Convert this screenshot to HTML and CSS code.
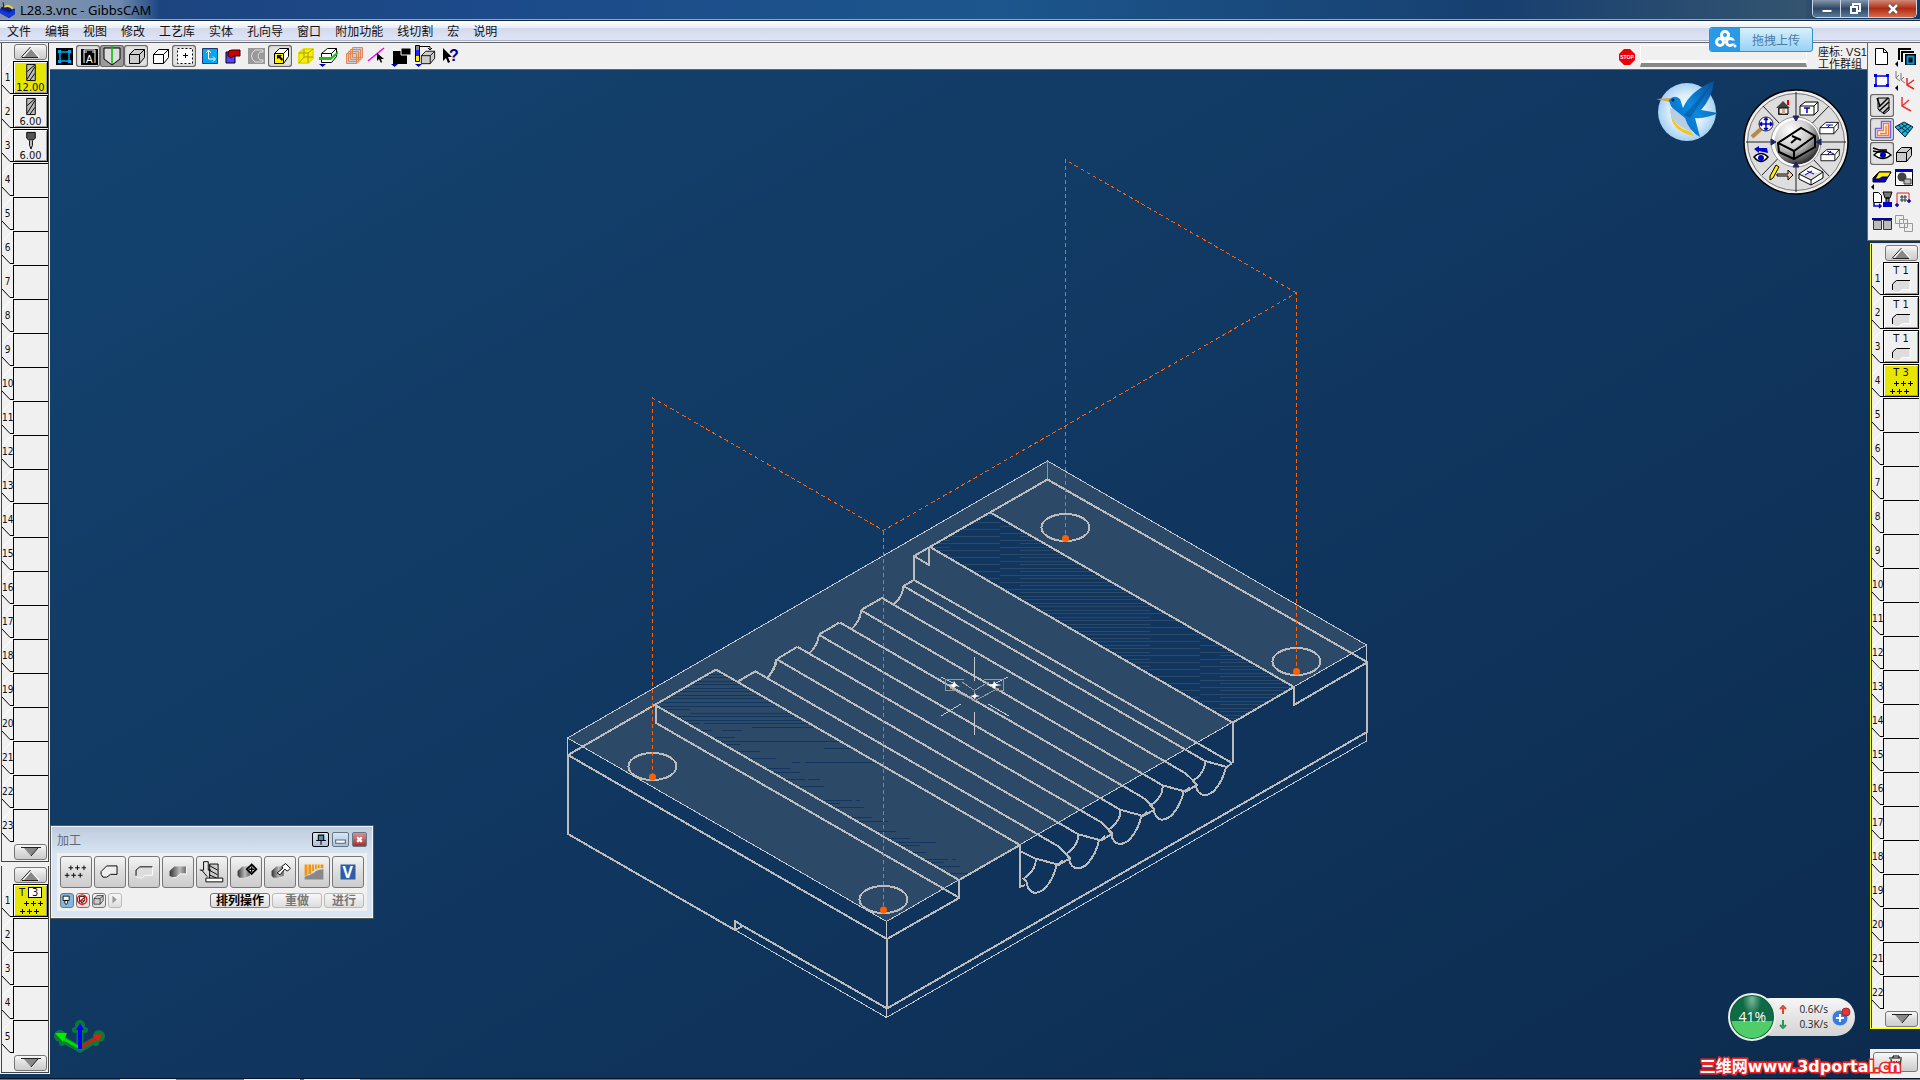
FILE: index.html
```
<!DOCTYPE html>
<html lang="zh-CN">
<head>
    <meta charset="UTF-8">
    <meta name="viewport" content="width=device-width, initial-scale=1.0">
    <title>L28.3.vnc - GibbsCAM</title>
    <link rel="stylesheet" href="styles.css">
</head>
<body>

    <!-- Shared shapes -->
    <svg class="sprite" aria-hidden="true">
        <symbol id="up" viewBox="0 0 24 12"><path d="M3 11L12 2l9 9z" fill="#fff"/><path d="M5 11l7-8 7 8z" fill="#888"/><path d="M2 11.500L11.500 1M3 11.500h16" stroke="#222" fill="none"/></symbol>
        <symbol id="down" viewBox="0 0 24 12"><path d="M5 2h14l-7 8z" fill="#888"/><path d="M2 1.500h20M19 2l-7 8" stroke="#222" fill="none"/></symbol>
        <symbol id="mill" viewBox="0 0 12 20"><path d="M1.500 1.500h9v17h-9z" fill="#bbb" stroke="#000"/><path d="M2 9l8-7M2 17l8-13M5 18l5-7" stroke="#000" fill="none"/></symbol>
        <symbol id="pluses" viewBox="0 0 24 16"><path d="M5 4.500h5M7.500 2v5M12 4.500h5M14.500 2v5M19 4.500h5M21.500 2v5M1 12.500h5M3.500 10v5M8 12.500h5M10.500 10v5M15 12.500h5M17.500 10v5" stroke="#000" fill="none"/></symbol>
        <symbol id="contour" viewBox="0 0 20 14"><path d="M1 12V5l4-4h14v9h-7l-4 3H3z" fill="#ddd"/><path d="M1.500 11V5l4-3.500H19" stroke="#000" fill="none"/><path d="M2 12l2 1.500h4l3-3h8V2" stroke="#fff" fill="none"/></symbol>
        <symbol id="cube" viewBox="0 0 18 18"><path d="M1.500 7.500l5-5h10v8l-5 6h-10z" fill="currentColor" stroke="#000"/><path d="M1.500 7.500h10v9M11.500 7.500l5-5" fill="none" stroke="#000"/></symbol>
        <symbol id="block" viewBox="0 0 24 16"><path d="M1 7L8 1h14v7l-5 6H1z" fill="#fff" stroke="#000"/><path d="M1 7h16v7M17 7l5-6" stroke="#000" fill="none"/></symbol>
    </svg>

    <header class="titlebar">
        <svg class="app-icon" viewBox="0 0 16 16"><path d="M0 7l5-4 10 4v5l-6 4-9-5z" fill="#0a1a9a"/><path d="M0 7l9 4 6-4v5l-6 4-9-5z" fill="#1238d8"/><path d="M4 5q5-3 9 2" stroke="#e8d820" stroke-width="2" fill="none"/><path d="M3 0l1 7-3-2" stroke="#222" fill="none"/></svg>
        <h1>L28.3.vnc - GibbsCAM</h1>
        <div class="window-buttons">
            <button aria-label="最小化"><svg viewBox="0 0 14 12"><path d="M2 6.500h10v3H2z" fill="#fff" stroke="#456"/></svg></button>
            <button aria-label="还原"><svg viewBox="0 0 14 12"><path d="M5 3V1h7v7h-2" fill="none" stroke="#fff" stroke-width="2"/><path d="M3 4h6v6H3z" fill="none" stroke="#fff" stroke-width="2"/></svg></button>
            <button class="close" aria-label="关闭"><svg viewBox="0 0 14 12"><path d="M3 2l8 8M11 2l-8 8" stroke="#444" stroke-width="4"/><path d="M3 2l8 8M11 2l-8 8" stroke="#fff" stroke-width="2.500"/></svg></button>
        </div>
    </header>

    <nav class="menubar">
        <button>文件</button>
        <button>编辑</button>
        <button>视图</button>
        <button>修改</button>
        <button>工艺库</button>
        <button>实体</button>
        <button>孔向导</button>
        <button>窗口</button>
        <button>附加功能</button>
        <button>线切割</button>
        <button>宏</button>
        <button>说明</button>
    </nav>

    <div class="workspace">

        <aside class="left">
            <section class="strip" aria-label="刀具">
                <button class="scroll" aria-label="向上"><svg><use href="#up"/></svg></button>
                <ol>
                    <li><span>1</span><button class="filled active"><svg class="tool"><use href="#mill"/></svg>12.00</button></li>
                    <li><span>2</span><button class="filled"><svg class="tool"><use href="#mill"/></svg>6.00</button></li>
                    <li><span>3</span><button class="filled"><svg class="tool" viewBox="0 0 12 20"><path d="M1.500 1.500h9v6l-2 2h-5l-2-2z" fill="#555" stroke="#000"/><path d="M4.500 10v5l1.500 4 1.500-4v-5" fill="#ccc" stroke="#000"/></svg>6.00</button></li>
                    <li><span>4</span><button></button></li>
                    <li><span>5</span><button></button></li>
                    <li><span>6</span><button></button></li>
                    <li><span>7</span><button></button></li>
                    <li><span>8</span><button></button></li>
                    <li><span>9</span><button></button></li>
                    <li><span>10</span><button></button></li>
                    <li><span>11</span><button></button></li>
                    <li><span>12</span><button></button></li>
                    <li><span>13</span><button></button></li>
                    <li><span>14</span><button></button></li>
                    <li><span>15</span><button></button></li>
                    <li><span>16</span><button></button></li>
                    <li><span>17</span><button></button></li>
                    <li><span>18</span><button></button></li>
                    <li><span>19</span><button></button></li>
                    <li><span>20</span><button></button></li>
                    <li><span>21</span><button></button></li>
                    <li><span>22</span><button></button></li>
                    <li><span>23</span><button></button></li>
                </ol>
                <button class="scroll" aria-label="向下"><svg><use href="#down"/></svg></button>
            </section>
            <section class="strip" aria-label="工序">
                <button class="scroll" aria-label="向上"><svg><use href="#up"/></svg></button>
                <ol>
                    <li><span>1</span><button class="filled active process"><i>T <b>3</b></i><svg class="pluses"><use href="#pluses"/></svg></button></li>
                    <li><span>2</span><button></button></li>
                    <li><span>3</span><button></button></li>
                    <li><span>4</span><button></button></li>
                    <li><span>5</span><button></button></li>
                </ol>
                <button class="scroll" aria-label="向下"><svg><use href="#down"/></svg></button>
            </section>
        </aside>

        <main class="center">
            <div class="toolbar">
                <button aria-label="工作群组"><svg viewBox="0 0 24 22"><path d="M4 3h17v17H4z"/><path d="M8 7h9v9H8z" fill="none" stroke="#00a8f0" stroke-width="1.500"/><path d="M6 5h3v3H6zM16 5h3v3h-3zM6 15h3v3H6zM16 15h3v3h-3z" fill="#00a8f0"/></svg></button>
                <button class="on" aria-label="文字"><svg viewBox="0 0 24 22"><path d="M5 4h17v16H5z"/><path d="M8 7h3M16 7h3M8 5v13M19 5v13M8 5h11" stroke="#fff" fill="none"/><text x="10" y="18" font-size="10" fill="#fff">A</text></svg></button>
                <button class="on dark" aria-label="毛坯"><svg viewBox="0 0 24 22"><path d="M4 3h16v11l-8 6-8-6z" fill="#ddd" stroke="#000"/><path d="M12 0v19" stroke="#0b0" stroke-width="1.500"/></svg></button>
                <button class="on" aria-label="实体显示"><svg class="c-grey" viewBox="0 0 24 22"><use href="#cube" x="4" y="2" width="18" height="18"/></svg></button>
                <button aria-label="线框"><svg class="c-white" viewBox="0 0 24 22"><use href="#cube" x="4" y="2" width="18" height="18"/></svg></button>
                <button class="on" aria-label="选取框"><svg viewBox="0 0 24 22"><path d="M5.500 3.500h15v15h-15z" fill="#fff" stroke="#000" stroke-dasharray="2 2"/><path d="M11 10.500h5M13.500 8v5" stroke="#000"/></svg></button>
                <button aria-label="坐标"><svg viewBox="0 0 24 22"><path d="M6.500 3.500h15v15h-15z" fill="#00a8f0" stroke="#237"/><path d="M12.500 6v8h6M10 8l2.500-3L15 8M17 11.500l2.500 2.500-2.500 2.500" fill="none" stroke="#fff"/></svg></button>
                <button aria-label="零件"><svg viewBox="0 0 24 22"><path d="M6 7h9v11H6z" fill="#54f" stroke="#000"/><path d="M12 5h8v6h-6l-3 2-3-2V8q0-3 4-3z" fill="#c00" stroke="#300"/></svg></button>
                <button aria-label="轮廓"><svg viewBox="0 0 24 22"><path d="M4 3h17v16H4z" fill="#999"/><path d="M19 5h-8q-7 6 0 12h8v-2h-3q-4-4 0-8h3z" fill="none" stroke="#ddd"/></svg></button>
                <button class="on" aria-label="选面"><svg viewBox="0 0 24 22"><path d="M6.500 8.500l5-5h9v8l-5 7h-9z" fill="#fff" stroke="#000"/><path d="M6.500 8.500h9v10h-9z" fill="#fe0" stroke="#000"/><path d="M15.500 8.500l5-5" stroke="#000"/><path d="M9 10h5l-1.500 1.500L15 14l-1 2-3-3-2 1z"/></svg></button>
                <button aria-label="选边"><svg viewBox="0 0 24 22"><path d="M7 8l5-4h9v9l-5 5H7z" fill="#f5ee10" stroke="#e8e000" stroke-width="2"/><path d="M7 8h9v10M16 8l5-4M12 4v8h9M12 12l-5 6" fill="none" stroke="#aa9f00"/></svg></button>
                <button aria-label="切片"><svg viewBox="0 0 24 22"><path d="M5.500 8.500l6-5h9v8l-5 6h-10z" fill="#fff" stroke="#000"/><path d="M5.500 8.500h10v3M15.500 8.500l5-5" fill="none" stroke="#000"/><path d="M3 12h12l7-6v3l-7 6H3z" fill="#2b2"/><path d="M3 19h7l-3.500 3z" fill="#00a"/></svg></button>
                <button aria-label="图层"><svg viewBox="0 0 24 22"><path d="M6 9l6-6h11v10l-5 6H6z" fill="#ccc"/><path d="M6.500 8.500h10v10h-10zM8.500 6.500h10v10h-10zM10.500 4.500h10v10h-10zM12.500 2.500h10v10h-10z" fill="none" stroke="#e08858"/></svg></button>
                <button aria-label="线段"><svg viewBox="0 0 24 22"><path d="M4 16L20 3" stroke="#e0e" stroke-width="1.500"/><path d="M13 8v8l2-2 2 4 1-1-1-3h3z"/></svg></button>
                <button aria-label="颜色"><svg viewBox="0 0 24 22"><path d="M5 6h14v13H5z"/><path d="M13 3h10v7H13z" stroke="#f0f0f0"/><path d="M3 19h7l-3.500 3z" fill="#00a"/></svg></button>
                <button aria-label="渲染"><svg class="c-grey" viewBox="0 0 24 22"><path d="M4 1h3v4H4z" fill="#888"/><path d="M4 5h3v6H4z" fill="#22f"/><path d="M4 11h3v5H4z" fill="#fe0"/><path d="M3.500.5h4v16h-4zM8 1.500h10v3M16 3l2 2 2-2" fill="none" stroke="#000"/><use href="#cube" x="8" y="4" width="16" height="16"/><path d="M3 19h7l-3.500 3z" fill="#00a"/></svg></button>
                <button aria-label="帮助"><svg viewBox="0 0 24 22"><path d="M7 3v13l3-3 2 5 2-1-2-5h4z"/><text x="13" y="16" font-size="16" font-weight="bold" fill="#008">?</text></svg></button>

                <div class="status">
                    <svg class="stop" viewBox="0 0 16 16"><path d="M5 0h6l5 5v6l-5 5H5l-5-5V5z" fill="#e00"/><text x="8" y="10" font-size="5" font-weight="bold" text-anchor="middle" fill="#fff">STOP</text></svg>
                    <div class="progress"></div>
                    <p><span>座标: VS1</span><span>工作群组</span></p>
                </div>
            </div>

            <div class="viewport">
                <svg class="scene" viewBox="50 70 1817 1008" preserveAspectRatio="xMinYMin meet">
                    <defs>
                        <pattern id="hatch" width="200" height="7" patternUnits="userSpaceOnUse">
                            <path d="M0 1.500h150M20 4.500h180" stroke="#2c4a67"/>
                        </pattern>
                        <clipPath id="pocket"><path d="M716 669.500L1020 845 959 880 656 705.500z"/></clipPath>
                        <g id="scallop">
                            <path d="M1205 761l22 6 5-4M1205 761q1 11-12 20l4 5M1226 767q-3 14-12 24-13 10-18-4l1-2"/>
                        </g>
                        <g id="groove">
                            <path d="M903.500 586L1205 761M882 598l303 175q5 4 12 12M903.500 586q-1 11-10 19M1197 785l-12 7"/>
                            <use href="#scallop"/>
                        </g>
                    </defs>

                    <!-- stock block, top face -->
                    <path d="M1047.500 461L1366.500 645 886.500 921.500 567.500 738z" fill="#2c4a67"/>
                    <path d="M989.500 512L1294 687 1232.500 722.500 930 547z" fill="#11365f"/>
                    <path d="M989.500 512L1294 687 1232.500 722.500 930 547z" fill="url(#hatch)"/>
                    <g clip-path="url(#pocket)" stroke="#11365f" shape-rendering="crispEdges">
                        <path d="M650 674.500h90M650 677.500h90M650 681.500h90M650 684.500h100M650 688.500h100M650 691.500h110M650 695.500h115M650 698.500h120M650 702.500h130M650 706.500h140M650 709.500h40M690 713.500h100M650 716.500h160M650 720.500h170M650 723.500h50M704 723.500h120M752 727.500h90M650 730.500h62M722 730.500h20M650 737.500h85M650 741.500h200M650 744.500h90M824 748.500h50M650 751.500h110M650 758.500h126M792 762.500h8M805 762.500h90M650 768.500h140M650 772.500h150M650 779.500h155M808 779.500h12M650 786.500h174M650 800.500h202M856 800.500h4M650 803.500h190M650 807.500h214M650 817.500h222M650 821.500h238M650 831.500h246M650 838.500h260M650 842.500h286M650 845.500h270M650 852.500h276M650 859.500h298M952 859.500h4M650 862.500h294M650 866.500h310M650 873.500h320"/>
                    </g>

                    <!-- stock outline -->
                    <g class="thin">
                        <path d="M1047.500 461L1366.500 645 886.500 921.500 567.500 738zM567.500 738v18M1366.500 645v96M886.500 921v96M735 930l151.500 87.500L1366.500 741"/>
                        <path d="M1047.500 461v18" stroke="#8b96a2"/>
                    </g>

                    <!-- solid edges -->
                    <g class="edge">
                        <path d="M1367 662L1047.500 479.500 914 556v24M914 556l15 9v-18"/>
                        <path d="M989.500 512L1294 687M930 547l302.500 175.500"/>
                        <path d="M914 580l318 183M903.500 586l10.500-6"/>
                        <path d="M882 598l-21 12M839.500 622.500l-20.500 12M797 647l-20 12M755 671.500l-17 10M776 659q-1 11-9 19"/>
                        <path d="M568 755l148-85.500L1020 845M656 705.500L959 880M656 705.500V723l302 174"/>
                        <path d="M568 755v79l167 96v-9l8 5-8 4M743 926l144 82.500L1367 732v-69.500L1294 705v-18l-61 35.500V763"/>
                        <path d="M568 755l319 184 72-41v-18l61-35v42l5-2M887 939v69.500M1020 851l16 8"/>
                        <use href="#groove"/>
                        <use href="#groove" x="-42.300" y="24.400"/>
                        <use href="#groove" x="-84.600" y="48.800"/>
                        <use href="#groove" x="-126.900" y="73.200"/>
                        <use href="#scallop" x="-169.200" y="97.600"/>
                    </g>
                    <g class="edge">
                        <ellipse cx="652.500" cy="766.500" rx="24" ry="13.500"/>
                        <ellipse cx="883.500" cy="899.500" rx="24" ry="13.500"/>
                        <ellipse cx="1065.500" cy="527.500" rx="24" ry="13.500"/>
                        <ellipse cx="1296.500" cy="661.500" rx="24" ry="13.500"/>
                    </g>

                    <!-- part origin -->
                    <g class="thin">
                        <path d="M974.500 657v24M974.500 712v23M961 704l-20 12M988 704l21 12M941 677l14 7M1008 677l-14 7"/>
                        <path d="M964 679.500h-18.500v11h8M984 679.500h19.500v11h-8M950 688l24.500 13 24-13M962 682l12.500 8.500 14-8.500M974.500 690v10" stroke="#999"/>
                    </g>
                    <path d="M948 685l5-1 1-3 2 3 4 3-4-1-2 2-2-2zM986 685l7-1 1-3 2 3 6 1-6 1-2 3-2-3zM970 696l4-1 1-2 1 2 4 1-4 1-1 2-2-2z" fill="#fff"/>

                    <!-- drill toolpath -->
                    <path class="rapid" d="M652.500 777V398l231 132.500 413-237.500v379M1296.500 293l-231-133v378M883.500 530.500V910"/>
                    <g fill="#ff6000">
                        <circle cx="652.500" cy="777" r="3.500"/>
                        <circle cx="883.500" cy="910" r="3.500"/>
                        <circle cx="1065.500" cy="538.500" r="3.500"/>
                        <circle cx="1296.500" cy="671.500" r="3.500"/>
                    </g>
                </svg>

                <svg class="axes" viewBox="0 0 54 38">
                    <g stroke="#0a7a3c" stroke-width="7" stroke-linecap="round"><path d="M27 31V8M27 31L7 20M27 31l20-12"/></g>
                    <g fill="#0a7a3c"><circle cx="27" cy="7" r="5"/><circle cx="22" cy="12" r="3"/><circle cx="32" cy="12" r="3"/><circle cx="7" cy="18" r="6"/><circle cx="46" cy="18" r="6"/><circle cx="9" cy="25" r="3"/><circle cx="43" cy="25" r="3"/></g>
                    <path d="M27 30L9 20" stroke="#0d0" stroke-width="3"/><path d="M2 15l12 0-4 9z" fill="#0e0"/>
                    <path d="M27 30l18-11" stroke="#d22010" stroke-width="3"/><path d="M49 16l-4 8-5-7z" fill="#e02010"/>
                    <path d="M27 31V9" stroke="#00f" stroke-width="4"/><path d="M23 12l4-7 4 7z" fill="#00f"/>
                </svg>

                <svg class="bird" viewBox="0 0 64 62">
                    <defs><radialGradient id="sky"><stop offset="0" stop-color="#fff"/><stop offset=".6" stop-color="#dceefc"/><stop offset="1" stop-color="#a5d0f4"/></radialGradient>
                    <linearGradient id="wing" x1="1" y1="0" x2="0" y2="1"><stop offset="0" stop-color="#0a4890"/><stop offset=".5" stop-color="#0a8ae0"/><stop offset="1" stop-color="#0660b8"/></linearGradient></defs>
                    <circle cx="31" cy="32" r="29" fill="url(#sky)"/>
                    <path d="M15 32q2 15 20 20l3 4q-24-5-23-24z" fill="#f5c518"/>
                    <path d="M14 28q-1 16 22 24l-5-16-8-8z" fill="#b8cfe2"/>
                    <path d="M0 19l14-1v4z" fill="#d8a848"/>
                    <path d="M13 20q5-6 11-1l3 9Q34 11 58 1 56 18 45 30l17 3q-12 6-23 5l5 19q-11-6-15-19l-10-8q-5-3-6-10z" fill="url(#wing)"/>
                    <path d="M28 35Q38 25 56 3 44 24 34 38z" fill="#084c94" opacity=".5"/>
                    <circle cx="17" cy="20" r="1.500" fill="#024"/>
                </svg>

                <svg class="wheel" viewBox="0 0 106 106">
                    <defs><radialGradient id="ball" cx=".35" cy=".25" r=".8"><stop offset="0" stop-color="#fff"/><stop offset=".5" stop-color="#ccc"/><stop offset="1" stop-color="#222"/></radialGradient></defs>
                    <circle cx="53" cy="53" r="52" fill="#eee" stroke="#000" stroke-width="1.500"/>
                    <circle cx="53" cy="53" r="48.500" fill="#dedede" stroke="#777"/>
                    <path d="M53 3v100M3 53h100M20 17l66 70M86 17L19 86" stroke="#222"/>
                    <circle cx="53" cy="53" r="25" fill="#fff" stroke="#999"/>
                    <circle cx="54" cy="53" r="22.500" fill="url(#ball)"/>
                    <path d="M50 27h6l-3 5zM50 78h6l-3-5zM28 50v6l5-3zM78 50v6l-5-3z" fill="#226" stroke="#226"/>
                    <path d="M35 54l23-15 14 8v11L51 70 36 63zM35 54l16 8 21-15M51 62v8" fill="none" stroke="#000" stroke-width="2"/>
                    <path d="M49 47l9 4M54 49l-6 5" stroke="#000" stroke-width="2"/>
                    <path d="M33 19l7-7 7 7zM35 19h10v7H35z" fill="#444"/><path d="M36 19h9v6h-9z" fill="#eee" stroke="#000"/><path d="M39 20h3v5h-3z" fill="#ca8"/><path d="M44 11h2v5h-2z" fill="#d00"/>
                    <path d="M57 17l5-4h13v9l-4 4H57zM57 17h14v9M71 17l4-4" fill="#fff" stroke="#000"/><path d="M61 19h6M64 19v5" stroke="#00b" stroke-width="1.500"/>
                    <use href="#block" x="76" y="32" width="21" height="15"/><path d="M83 36h7M87 36l-3 3" stroke="#00b"/>
                    <use href="#block" x="77" y="59" width="21" height="15"/><path d="M84 62l7 3M88 62l-4 4" stroke="#00b"/>
                    <path d="M56 85l12-8 12 6v6l-12 7-12-6zM56 85l12 6 12-8M68 91v5" fill="#fff" stroke="#000"/><path d="M64 82l7 3M69 82l-7 4" stroke="#00b"/>
                    <path d="M9 48l10-9" stroke="#b58a48" stroke-width="4"/><circle cx="23" cy="35" r="7" fill="#fff" stroke="#222"/><path d="M17 35h12M23 29v12M21 31l2-2 2 2M21 39l2 2 2-2M19 33l-2 2 2 2M27 33l2 2-2 2" fill="none" stroke="#00c" stroke-width="1.500"/>
                    <path d="M25 64l-1-5-8 0v-2l-5 3 5 4v-2z" fill="#00c"/><path d="M11 68q7-7 14 0-7 9-14 0z" fill="#fff" stroke="#000" stroke-width="1.500"/><circle cx="18" cy="69" r="3" fill="#00c"/>
                    <path d="M27 87l6-11 3 2-6 11-3 2z" fill="#fe0" stroke="#000"/><path d="M34 85h11v-4l5 5-5 5v-4H34z" fill="#eca" stroke="#000"/>
                </svg>

                <section class="machining">
                    <header>
                        <h2>加工</h2>
                        <button class="pin" aria-label="固定"><svg viewBox="0 0 14 12"><path d="M5 2h5v5H5zM3 7h9M7.500 7v4" fill="#58a" stroke="#000"/></svg></button>
                        <button class="mini" aria-label="最小化"><svg viewBox="0 0 14 12"><path d="M2.500 6.500h9v3h-9z" fill="#fff" stroke="#567"/></svg></button>
                        <button class="shut" aria-label="关闭"><svg viewBox="0 0 14 12"><path d="M4.500 3.500l5 5M9.500 3.500l-5 5" stroke="#fff" stroke-width="2.500"/></svg></button>
                    </header>
                    <div class="machining-body">
                        <div class="operations">
                            <button aria-label="钻孔"><svg viewBox="0 0 32 32"><use href="#pluses" x="3" y="7" width="24" height="16"/></svg></button>
                            <button aria-label="外形"><svg viewBox="0 0 32 32"><path d="M6.500 18.500v-3l6-6h11v9h-7l-4 3h-4z" fill="#eee" stroke="#000"/></svg></button>
                            <button aria-label="轮廓"><svg viewBox="0 0 32 32"><use href="#contour" x="6" y="9" width="20" height="14"/></svg></button>
                            <button aria-label="粗加工"><svg viewBox="0 0 32 32"><defs><linearGradient id="metal"><stop offset="0" stop-color="#333"/><stop offset=".6" stop-color="#bbb"/><stop offset="1" stop-color="#666"/></linearGradient></defs><path d="M7 20v-5l5-5h13v8h-7l-4 4H9z" fill="url(#metal)"/><path d="M8 21l2 1h4l4-4h7v-8" fill="none" stroke="#fff"/></svg></button>
                            <button aria-label="螺纹铣削"><svg viewBox="0 0 32 32"><path d="M13.500 7.500h9v16h-9z" fill="#ccc" stroke="#000"/><path d="M13 9l9 5M13 14l9 5M13 19l9 4M3 14h4V5h5v9h3M5 14l6 7" stroke="#000" fill="none"/><path d="M9.500 22.500h18v4h-18z" fill="#fff" stroke="#000"/></svg></button>
                            <button aria-label="曲面"><svg viewBox="0 0 32 32"><path d="M7 20v-5l5-5h8v10l-6 2H9z" fill="url(#metal)"/><path d="M22 8l5 5-5 5-5-5z" fill="#fff" stroke="#000" stroke-width="2"/><path d="M19 13h6M22 10v6" stroke="#000" stroke-width="1.500"/></svg></button>
                            <button aria-label="高级"><svg viewBox="0 0 32 32"><path d="M7 20v-5l5-5h8v10l-6 2H9z" fill="url(#metal)"/><path d="M22 7l5 5-3 3-3-2-5 6-3-2 6-5-1-2z" fill="#fff" stroke="#000"/></svg></button>
                            <button aria-label="五轴"><svg viewBox="0 0 32 32"><path d="M6 8h3v12H6zM10 8h3v10h-3zM14 8h2v7h-2zM17 8h2v5h-2zM20 8h2v4h-2zM23 8h3v4h-3z" fill="#f5930a"/><path d="M6 24v-3q10-3 12-6 3-2 8-2v11z" fill="#888"/></svg></button>
                            <button aria-label="VoluMill"><svg viewBox="0 0 32 32"><path d="M8 8h16v16H8z" fill="#2a5ca8"/><text x="10" y="22" font-size="17" font-weight="bold" fill="#fff">V</text></svg></button>
                        </div>
                        <div class="actions">
                            <button class="small lit" aria-label="刀具"><svg viewBox="0 0 14 15"><path d="M2.500 2.500h7v5h-7zM4.500 7.500h3v3l-1.500 2-1.500-2z" fill="#fff" stroke="#000"/></svg></button>
                            <button class="small" aria-label="禁止"><svg viewBox="0 0 14 15"><path d="M3 3h6v5H3zM4 8l2 3 2-3" fill="#fff" stroke="#000"/><circle cx="6" cy="6.500" r="5.500" fill="none" stroke="#e00" stroke-width="1.500"/><path d="M2 10l8-7" stroke="#e00" stroke-width="1.500"/></svg></button>
                            <button class="small c-grey" aria-label="实体"><svg viewBox="0 0 14 15"><use href="#cube" x="0" y="0" width="13" height="13"/></svg></button>
                            <button class="small off" aria-label="播放"><svg viewBox="0 0 14 15"><path d="M4 2l5 4.500-5 4.500z" fill="#999"/></svg></button>
                            <button class="wide main">排列操作</button>
                            <button class="wide">重做</button>
                            <button class="wide last">进行</button>
                        </div>
                    </div>
                </section>

                <div class="netspeed">
                    <div class="gauge">41%</div>
                    <ul>
                        <li><svg viewBox="0 0 8 9"><path d="M4 9V3M1 4l3-3 3 3" stroke="#d9482e" stroke-width="2" fill="none"/></svg>0.6K/s</li>
                        <li><svg viewBox="0 0 8 9"><path d="M4 0v6M1 5l3 3 3-3" stroke="#239a4e" stroke-width="2" fill="none"/></svg>0.3K/s</li>
                    </ul>
                    <button aria-label="加速"><svg viewBox="0 0 20 20"><circle cx="9" cy="11" r="8" fill="#3a7be0" stroke="#cdd"/><path d="M5 11h8M9 7v8" stroke="#fff" stroke-width="2"/><circle cx="15" cy="5" r="4" fill="#e03838" stroke="#a22"/></svg></button>
                </div>

                <p class="watermark">三维网www.3dportal.cn</p>
            </div>
        </main>

        <aside class="right">
            <div class="palette">
                <button aria-label="新建"><svg viewBox="0 0 24 24"><path d="M5.500 2.500h8l4 4v12h-12z" fill="#fff" stroke="#000"/><path d="M13.500 2.500v4h4" fill="none" stroke="#000"/></svg></button>
                <button aria-label="群组列表"><svg viewBox="0 0 24 24"><path d="M5 14V3h12M8 16V6h12" fill="none" stroke="#000" stroke-width="2"/><path d="M11 8h11v11H11z"/><path d="M13.500 10.500h6v7h-6z" fill="none" stroke="#09d" stroke-width="2"/><path d="M1 18l3-3v6z"/></svg></button>
                <button aria-label="群组"><svg viewBox="0 0 24 24"><path d="M6 6h12v10H6z" fill="#fff" stroke="#00d" stroke-width="1.500"/><path d="M4 4h3v3H4zM16 4h3v3h-3zM4 14h3v3H4zM16 14h3v3h-3z" fill="#00d"/></svg></button>
                <button aria-label="坐标系列表"><svg viewBox="0 0 24 24"><path d="M2 1v7l4 3M7 3v7l4 3M2 8l3-3M7 10l3-3" fill="none" stroke="#777"/><path d="M13 8v7l7 4M13 15l7-5" fill="none" stroke="#e22" stroke-width="1.500"/><path d="M1 18l3-3v6z"/></svg></button>
                <button class="on" aria-label="刀具"><svg viewBox="0 0 24 24"><path d="M8 4h11v12l-5 4-6-5z" fill="#ccc" stroke="#000"/><path d="M9 13l9-9M9 17L19 8M13 19l6-6M7 4l3 8" stroke="#000" stroke-width="1.500"/></svg></button>
                <button aria-label="坐标系"><svg viewBox="0 0 24 24"><path d="M8 3v9l9 5M8 12l7-6" fill="none" stroke="#e33" stroke-width="1.500"/></svg></button>
                <button class="on" aria-label="几何"><svg viewBox="0 0 24 24"><path d="M5.500 19.500v-9h6v-7h9v16z" fill="#fff" stroke="#66f" stroke-width="1.500"/><path d="M7.500 17.500v-5h6v-7h5v12zM10 15.500h6v-8" fill="none" stroke="#f28030" stroke-width="1.500"/></svg></button>
                <button aria-label="曲面"><svg viewBox="0 0 24 24"><path d="M1 9l9-5 9 5-8 10z" fill="#1ab4cc" stroke="#024"/><path d="M4 7l10 8M7 5l9 8M4 12l10-6M7 16l10-8" stroke="#024"/></svg></button>
                <button class="on" aria-label="显示"><svg viewBox="0 0 24 24"><path d="M4 13q8-8 17 0-8 7-17 0z" fill="#fff" stroke="#000" stroke-width="1.500"/><path d="M3 6l6 2 8 0M3 9l5 1 9 0" fill="none" stroke="#000" stroke-width="1.500"/><circle cx="13" cy="13" r="3" fill="#00a"/></svg></button>
                <button class="c-grey" aria-label="实体"><svg viewBox="0 0 24 24"><use href="#cube" x="1" y="3" width="18" height="18"/></svg></button>
                <button aria-label="工艺"><svg viewBox="0 0 24 24"><path d="M3 12l6-6h12l-6 10H3z" fill="#00c" stroke="#000"/><path d="M9 6h12l-3 5h-6l-3 2H5z" fill="#fe0" stroke="#000"/><path d="M1 21l3-3v6z"/></svg></button>
                <button aria-label="仿真"><svg viewBox="0 0 24 24"><path d="M1.500 3.500h17v16h-17z" fill="#fff" stroke="#000"/><path d="M1 3h18v3H1z" fill="#00c"/><circle cx="8" cy="11" r="4.500" fill="#444"/><path d="M10 13h7v5h-7z" fill="#bbb" stroke="#333"/></svg></button>
                <button aria-label="后处理"><svg viewBox="0 0 24 24"><path d="M3.500 2.500h5l3 3v7h-8z" fill="#fff" stroke="#000"/><path d="M13 2h9l-2 6h-5zM16 8h3v5h-3z" fill="#777" stroke="#000"/><path d="M13 12h9v5h-9z" fill="#00c"/><path d="M4 13v3h7M9 14l2 2-2 2" fill="none" stroke="#00c" stroke-width="1.500"/></svg></button>
                <button aria-label="测量"><svg viewBox="0 0 24 24"><path d="M3 13V3h12v6" fill="none" stroke="#d22"/><path d="M8 5v7M11 5v7M6 7h7M6 10h7" stroke="#333"/><path d="M1 15h4M3 13v4M13 11h4M15 9v4" stroke="#00c" stroke-width="1.500"/></svg></button>
                <button aria-label="平铺"><svg viewBox="0 0 24 24"><path d="M3.500 6.500h8v9h-8zM13.500 6.500h8v9h-8z" fill="#bbb" stroke="#333"/><path d="M2 4h20v2H2z" fill="#00a"/></svg></button>
                <button aria-label="层叠"><svg viewBox="0 0 24 24"><path d="M1.500 1.500h8v8h-8zM5.500 5.500h8v8h-8zM10.500 9.500h8v8h-8z" fill="#eee" stroke="#999"/></svg></button>
            </div>

            <section class="strip operations-list" aria-label="操作">
                <button class="scroll" aria-label="向上"><svg><use href="#up"/></svg></button>
                <ol>
                    <li><span>1</span><button class="filled process"><i>T 1</i><svg class="contour"><use href="#contour"/></svg></button></li>
                    <li><span>2</span><button class="filled process"><i>T 1</i><svg class="contour"><use href="#contour"/></svg></button></li>
                    <li><span>3</span><button class="filled process"><i>T 1</i><svg class="contour"><use href="#contour"/></svg></button></li>
                    <li><span>4</span><button class="filled active process"><i>T 3</i><svg class="pluses"><use href="#pluses"/></svg></button></li>
                    <li><span>5</span><button></button></li>
                    <li><span>6</span><button></button></li>
                    <li><span>7</span><button></button></li>
                    <li><span>8</span><button></button></li>
                    <li><span>9</span><button></button></li>
                    <li><span>10</span><button></button></li>
                    <li><span>11</span><button></button></li>
                    <li><span>12</span><button></button></li>
                    <li><span>13</span><button></button></li>
                    <li><span>14</span><button></button></li>
                    <li><span>15</span><button></button></li>
                    <li><span>16</span><button></button></li>
                    <li><span>17</span><button></button></li>
                    <li><span>18</span><button></button></li>
                    <li><span>19</span><button></button></li>
                    <li><span>20</span><button></button></li>
                    <li><span>21</span><button></button></li>
                    <li><span>22</span><button></button></li>
                </ol>
                <button class="scroll" aria-label="向下"><svg><use href="#down"/></svg></button>
            </section>

            <div class="trash">
                <button aria-label="删除"><svg viewBox="0 0 16 16"><path d="M1 4h13M5 4V2h6v2M3 5l1 10h8l1-10M6 7v6M8.500 7v6M11 7v6" fill="none" stroke="#000"/></svg></button>
            </div>
        </aside>

        <button class="upload">
            <svg viewBox="0 0 30 24"><g fill="none" stroke="#fff" stroke-width="3"><circle cx="10" cy="14" r="3.500"/><circle cx="20" cy="14" r="3.500"/><circle cx="15" cy="7" r="3.500"/></g><path d="M20 14h6" stroke="#2a9ae6" stroke-width="3"/><circle cx="25" cy="18" r="1.500" fill="#fff"/></svg>
            <span>拖拽上传</span>
        </button>
    </div>

    <footer class="taskbar">
        <i></i><i></i><i></i>
    </footer>

</body>
</html>
```
FILE: styles.css
```
* {
    box-sizing: border-box;
}

body {
    margin: 0;
    min-height: 100vh;
    display: flex;
    flex-direction: column;
    font-family: "Noto Sans", "Noto Sans CJK SC", sans-serif;
    font-size: 12px;
    color: #111;
    background-color: #10365f;
}

button {
    font: inherit;
    color: inherit;
    margin: 0;
    padding: 0;
    border: none;
    background: none;
}

h1, h2, p, ol, ul {
    margin: 0;
    padding: 0;
    font-size: 12px;
    font-weight: normal;
    list-style: none;
}

svg {
    display: block;
}

.sprite {
    position: absolute;
    width: 0;
    height: 0;
}

.c-grey { color: #ccc; }
.c-white { color: #fff; }

/* Title bar */
.titlebar {
    display: flex;
    align-items: center;
    height: 21px;
    border-bottom: 1px solid #14284a;
    box-shadow: inset 0 -1px #8fa6cc;
    background: linear-gradient(90deg, #8796ac 0, #6d8ab0 120px, #1c4580 160px, #1c4a8a 25%, #1c568c 52%, #173f70 78%, #34546f 94%, #163a66 95%);
}

.app-icon {
    width: 16px;
    height: 16px;
    margin-right: 4px;
}

.titlebar h1 {
    flex: 1;
    font-size: 13px;
    line-height: 20px;
    color: #000;
}

.window-buttons {
    display: flex;
    align-self: flex-start;
    margin-right: 3px;
    height: 18px;
    border: 1px solid #cdd6e2;
    border-top: none;
    border-radius: 0 0 5px 5px;
    overflow: hidden;
}

.window-buttons button {
    width: 28px;
    display: flex;
    justify-content: center;
    align-items: center;
    border-right: 1px solid #cdd6e2;
    background: linear-gradient(#8496ac, #2c4866 50%, #587a9c);
}

.window-buttons .close {
    width: 47px;
    border: none;
    background: linear-gradient(#d08a78, #b02c14 50%, #d86a48);
}

.window-buttons svg {
    width: 14px;
    height: 12px;
}

/* Menu bar */
.menubar {
    display: flex;
    gap: 14px;
    height: 22px;
    padding-left: 7px;
    border-bottom: 1px solid #666;
    background: linear-gradient(#fff 0, #e9edf5 7px, #d3daec 7px, #dfe4f6 19px, #a9b4cc 19px, #a9b4cc 20px, #f4f4f4 20px);
}

.menubar button {
    line-height: 21px;
}

/* Workspace */
.workspace {
    position: relative;
    flex: 1;
    display: flex;
    background: linear-gradient(150deg, #134472 0%, #123c66 30%, #10365f 55%, #0c2b4e 100%);
}

.left {
    align-self: flex-start;
    width: 50px;
    padding: 0 1px 1px;
    background-color: #f0f0f0;
    display: flex;
    flex-direction: column;
    gap: 4px;
}

.strip {
    border: 1px solid #444;
    border-top: none;
    background-color: #f0f0f0;
}

.strip .scroll {
    display: block;
    width: 33px;
    height: 16px;
    margin: 1px 1px 1px auto;
    border: 1px solid #777;
    border-radius: 3px;
    background: linear-gradient(#f8f8f8, #ddd 50%, #ccc);
}

.scroll svg {
    width: 24px;
    height: 12px;
    margin: 0 auto;
}

.strip li {
    display: flex;
    height: 34px;
}

.strip li span {
    width: 11px;
    overflow: hidden;
    text-align: center;
    font-family: "DejaVu Sans Condensed", sans-serif;
    font-size: 10px;
    line-height: 34px;
    background: url("data:image/svg+xml,%3Csvg xmlns='http://www.w3.org/2000/svg' width='11' height='34'%3E%3Cpath d='M0 11L9 1h2' stroke='%23fff' fill='none'/%3E%3Cpath d='M0 24l8 8.500h3' stroke='%23000' fill='none'/%3E%3C/svg%3E") no-repeat;
}

.strip li button {
    flex: 1;
    height: 33px;
    border-left: 1px solid #000;
    border-top: 1px solid #000;
    font-family: "DejaVu Sans Condensed", sans-serif;
    font-size: 11px;
    line-height: 11px;
}

.strip li .filled {
    border: 1px solid #000;
    box-shadow: inset 1px 1px #fff, inset -1px -1px #999;
}

.strip li .active {
    background-color: #e6e600;
}

.tool {
    width: 12px;
    height: 19px;
    margin: 0 auto;
}

.process i {
    display: block;
    font-style: normal;
    line-height: 12px;
}

.process b {
    display: inline-block;
    width: 14px;
    border: 1px solid #000;
    background-color: #fff;
    font-weight: normal;
    line-height: 9px;
}

.strip .pluses {
    width: 24px;
    height: 16px;
    margin: 0 auto;
}

.strip .contour {
    width: 20px;
    height: 14px;
    margin: 2px auto 0;
}

/* Centre */
.center {
    flex: 1;
    min-width: 0;
    display: flex;
    flex-direction: column;
}

.toolbar {
    display: flex;
    height: 27px;
    padding: 2px 0 0 2px;
    border-bottom: 1px solid #666;
    background-color: #f0f0f0;
}

.toolbar > button {
    width: 24px;
    height: 22px;
}

.toolbar > button svg {
    width: 100%;
    height: 100%;
}

.toolbar text {
    font-family: "Liberation Sans", sans-serif;
}

.on {
    border-radius: 3px;
    box-shadow: inset 0 0 0 1px #666, inset 0 0 2px 1px #aaa;
    background-color: #e2e2e2;
}

.on.dark {
    background-color: #999;
}

.status {
    margin-left: auto;
    display: flex;
    align-items: flex-start;
}

.stop {
    width: 16px;
    height: 16px;
    margin: 4px 5px 0 0;
}

.progress {
    width: 167px;
    height: 22px;
    border: 1px solid #fff;
    border-bottom: 4px solid #888;
    box-shadow: inset 0 -3px #fff;
}

.status p {
    width: 49px;
    margin: 1px 0 0 11px;
    font-family: "Liberation Sans", "Noto Sans CJK SC", sans-serif;
    font-size: 11px;
    white-space: nowrap;
}

.status span {
    display: block;
    line-height: 12px;
}

/* Drawing area */
.viewport {
    position: relative;
    flex: 1;
}

.scene {
    width: 100%;
}

.thin {
    fill: none;
    stroke: #c4c8cc;
    stroke-width: 1;
    shape-rendering: crispEdges;
}

.edge {
    fill: none;
    stroke: #bcbcbc;
    stroke-width: 2;
    shape-rendering: crispEdges;
}

.rapid {
    fill: none;
    stroke: #ff6000;
    stroke-width: 1;
    stroke-dasharray: 4 3;
    shape-rendering: crispEdges;
}

.axes {
    position: absolute;
    left: 3px;
    bottom: 22px;
    width: 54px;
    height: 38px;
}

.bird {
    position: absolute;
    right: 147px;
    top: 10px;
    width: 64px;
    height: 62px;
}

.wheel {
    position: absolute;
    right: 18px;
    top: 19px;
    width: 106px;
    height: 106px;
}

/* Machining window */
.machining {
    position: absolute;
    left: 0;
    bottom: 159px;
    padding: 0 6px 7px;
    border: 1px solid #555;
    background: linear-gradient(#bccbdc, #d8e4f2 28px);
    box-shadow: inset 0 0 0 1px #eef4fa;
}

.machining header {
    display: flex;
    align-items: center;
    gap: 3px;
    height: 27px;
}

.machining h2 {
    flex: 1;
    color: #667;
}

.machining header button {
    width: 17px;
    height: 15px;
    border: 1px solid #678;
    border-radius: 2px;
    background: linear-gradient(#d8e6f4, #a8c4e0);
}

.machining header .pin {
    border-color: #000;
}

.machining header .shut {
    width: 15px;
    background: linear-gradient(#d89090, #a83028);
}

.machining-body {
    padding: 3px;
    background-color: #f0f0f0;
}

.operations {
    display: flex;
    gap: 2px;
}

.operations button {
    width: 32px;
    height: 32px;
    border: 1px solid #777;
    border-radius: 3px;
    background: linear-gradient(#f4f4f4, #ddd 50%, #ccc);
}

.operations svg {
    width: 30px;
    height: 30px;
}

.actions {
    display: flex;
    gap: 2px;
    margin-top: 5px;
}

.actions button {
    height: 15px;
    border: 1px solid #777;
    border-radius: 3px;
    background: linear-gradient(#f8f8f8, #ddd);
}

.actions .small {
    width: 14px;
}

.actions .lit {
    background: #7fb8dc;
}

.actions .off {
    border-color: #bbb;
}

.actions .wide {
    width: 50px;
    border-color: #bbb;
    color: #777;
    line-height: 13px;
    font-weight: bold;
}

.actions .main {
    width: 60px;
    margin-left: auto;
    border-color: #777;
    color: #000;
}

.actions .last {
    width: 40px;
}

/* Network speed ball */
.netspeed {
    position: absolute;
    right: 12px;
    bottom: 37px;
    display: flex;
    align-items: center;
    height: 48px;
    font-family: "Open Sans", sans-serif;
    font-size: 10px;
}

.netspeed::before {
    content: "";
    position: absolute;
    inset: 5px 0 5px 24px;
    border-radius: 19px;
    background: linear-gradient(#f6f6f6, #d4d4d4);
}

.gauge {
    position: relative;
    width: 48px;
    height: 48px;
    border: 2px solid #e8eeea;
    border-radius: 50%;
    background: radial-gradient(ellipse at 50% 10%, #7ab89a 0, rgba(14, 107, 69, 0) 30%), linear-gradient(#0e6b45 60%, #50cc68 60%);
    box-shadow: inset 0 0 0 1px #0a5a38;
    color: #fff;
    font-size: 14px;
    line-height: 44px;
    text-align: center;
}

.netspeed ul, .netspeed button {
    position: relative;
}

.netspeed li {
    display: flex;
    align-items: center;
    gap: 12px;
    margin-left: 3px;
    font-size: 10px;
    line-height: 15px;
    color: #222;
}

.netspeed li svg {
    width: 8px;
    height: 9px;
}

.netspeed button {
    width: 20px;
    height: 20px;
    margin: 0 4px 0 3px;
}

.watermark {
    position: absolute;
    right: -34px;
    bottom: 2px;
    z-index: 2;
    font-family: "DejaVu Sans", "Noto Sans CJK SC", sans-serif;
    font-size: 16px;
    font-weight: bold;
    line-height: 18px;
    color: #fff;
    white-space: nowrap;
    -webkit-text-stroke: 3px #e22;
    paint-order: stroke fill;
}

/* Right column */
.right {
    width: 53px;
    display: flex;
    flex-direction: column;
}

.palette {
    display: grid;
    grid-template-columns: 24px 24px;
    grid-auto-rows: 24px;
    padding: 3px 2px 2px;
    border-left: 1px solid #666;
    border-bottom: 1px solid #666;
    background-color: #f0f0f0;
}

.palette button {
    height: 23px;
}

.palette svg {
    width: 24px;
    height: 24px;
}

.operations-list {
    margin: 2px 0 0 3px;
    border: 1px solid #ff0;
    box-shadow: inset 1px 0 #333;
    padding: 0 0 0 1px;
}

.trash {
    margin: auto 0 0 3px;
    padding: 3px 2px 3px 3px;
    background-color: #f0f0f0;
}

.trash button {
    width: 100%;
    height: 20px;
    border: 1px solid #777;
    border-radius: 3px;
    background: linear-gradient(#f8f8f8, #ccc);
}

.trash svg {
    width: 16px;
    height: 16px;
    margin: 0 auto;
}

/* Upload badge, floats over the menu bar */
.upload {
    position: absolute;
    right: 107px;
    top: -16px;
    display: flex;
    width: 104px;
    height: 25px;
    border: 1px solid #3090d0;
    border-radius: 3px;
    overflow: hidden;
    background: linear-gradient(#d8f0fc, #98d2f4);
    color: #4a7ba8;
    line-height: 25px;
}

.upload svg {
    width: 30px;
    height: 24px;
    background-color: #2a9ae6;
}

.upload span {
    flex: 1;
}

/* Taskbar edge */
.taskbar {
    display: flex;
    gap: 4px;
    height: 2px;
    padding-left: 120px;
    border-top: 1px solid #0a1628;
    background-color: #5f7590;
}

.taskbar i {
    width: 56px;
    background-color: #eee;
}

.taskbar i:nth-child(2) {
    margin-left: 64px;
}
```
